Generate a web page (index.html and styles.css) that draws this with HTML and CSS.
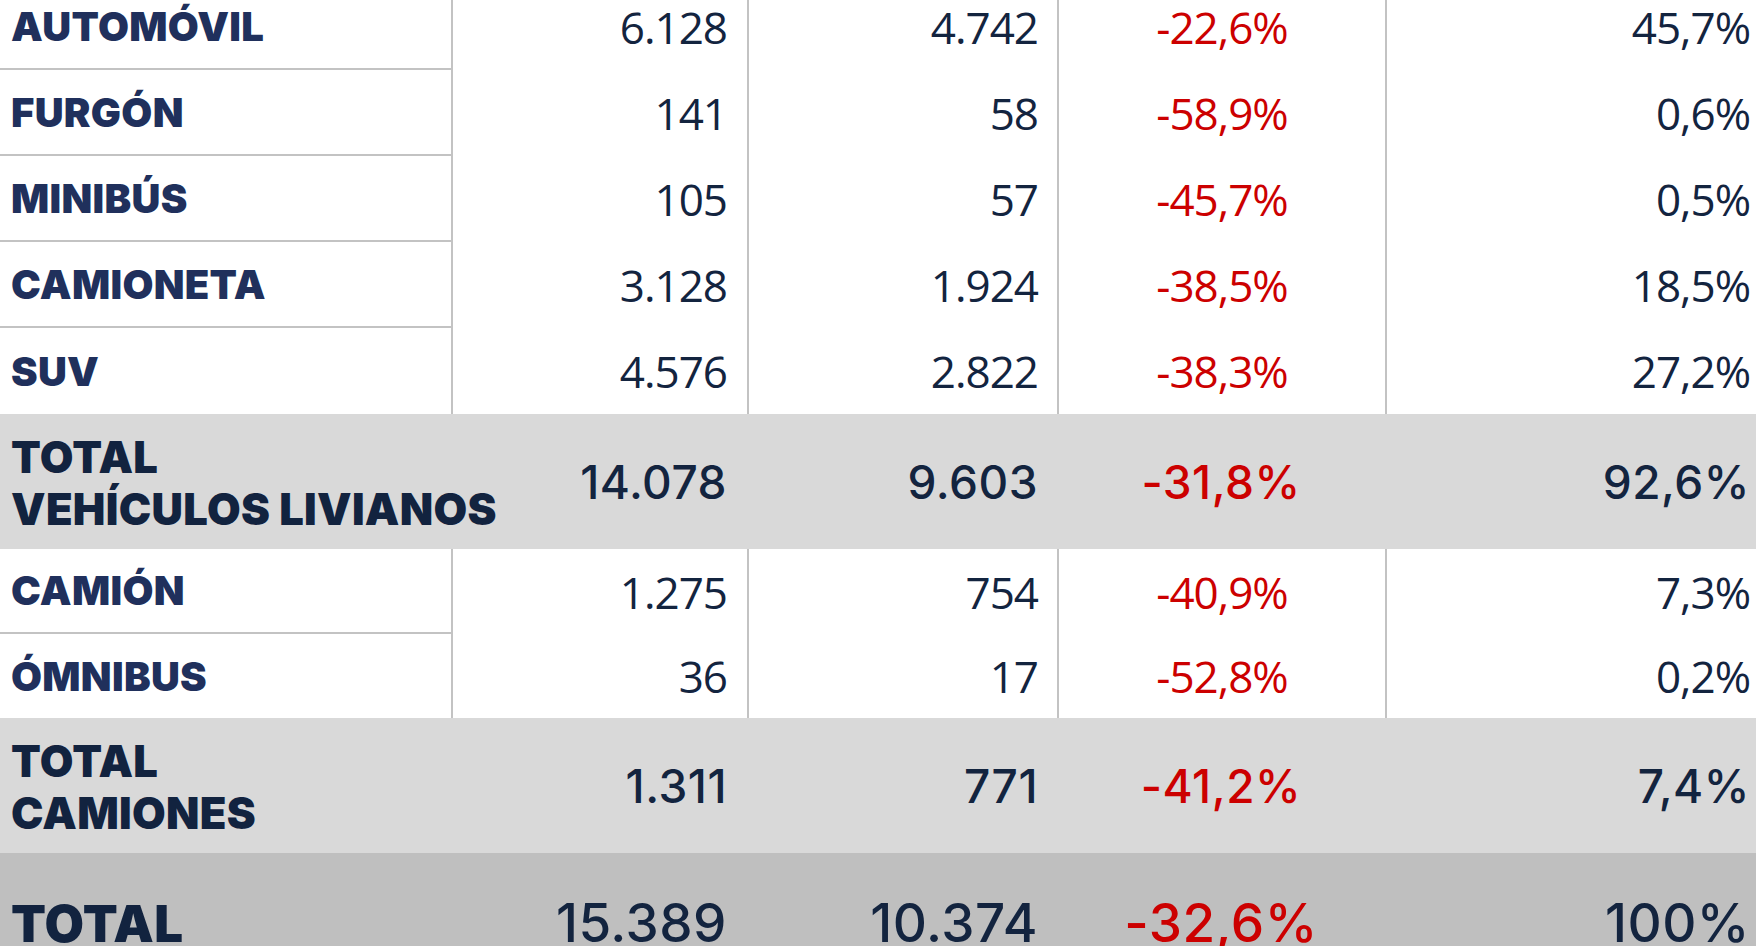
FILE: index.html
```html
<!DOCTYPE html>
<html lang="es">
<head>
<meta charset="utf-8">
<title>Ventas por segmento</title>
<link rel="stylesheet" href="styles.css">
</head>
<body>
<div class="table">
  <div class="row">
    <div class="label">AUTOMÓVIL</div>
    <div class="num c2">6.128</div>
    <div class="num c3">4.742</div>
    <div class="num c4 neg">-22,6%</div>
    <div class="num c5">45,7%</div>
  </div>
  <div class="row">
    <div class="label">FURGÓN</div>
    <div class="num c2">141</div>
    <div class="num c3">58</div>
    <div class="num c4 neg">-58,9%</div>
    <div class="num c5">0,6%</div>
  </div>
  <div class="row">
    <div class="label">MINIBÚS</div>
    <div class="num c2">105</div>
    <div class="num c3">57</div>
    <div class="num c4 neg">-45,7%</div>
    <div class="num c5">0,5%</div>
  </div>
  <div class="row">
    <div class="label">CAMIONETA</div>
    <div class="num c2">3.128</div>
    <div class="num c3">1.924</div>
    <div class="num c4 neg">-38,5%</div>
    <div class="num c5">18,5%</div>
  </div>
  <div class="row last">
    <div class="label">SUV</div>
    <div class="num c2">4.576</div>
    <div class="num c3">2.822</div>
    <div class="num c4 neg">-38,3%</div>
    <div class="num c5">27,2%</div>
  </div>
  <div class="row subtotal">
    <div class="label">TOTAL<br>VEHÍCULOS LIVIANOS</div>
    <div class="num c2">14.078</div>
    <div class="num c3">9.603</div>
    <div class="num c4 neg">-31,8%</div>
    <div class="num c5">92,6%</div>
  </div>
  <div class="row short">
    <div class="label">CAMIÓN</div>
    <div class="num c2">1.275</div>
    <div class="num c3">754</div>
    <div class="num c4 neg">-40,9%</div>
    <div class="num c5">7,3%</div>
  </div>
  <div class="row last short2">
    <div class="label">ÓMNIBUS</div>
    <div class="num c2">36</div>
    <div class="num c3">17</div>
    <div class="num c4 neg">-52,8%</div>
    <div class="num c5">0,2%</div>
  </div>
  <div class="row subtotal">
    <div class="label">TOTAL<br>CAMIONES</div>
    <div class="num c2">1.311</div>
    <div class="num c3">771</div>
    <div class="num c4 neg">-41,2%</div>
    <div class="num c5">7,4%</div>
  </div>
  <div class="row grand">
    <div class="label">TOTAL</div>
    <div class="num c2">15.389</div>
    <div class="num c3">10.374</div>
    <div class="num c4 neg">-32,6%</div>
    <div class="num c5">100%</div>
  </div>
</div>
</body>
</html>
```

FILE: styles.css
```css
html, body {
  margin: 0;
  padding: 0;
  background: #ffffff;
  overflow: hidden;
}

.table {
  width: 1756px;
  margin-top: -16px;
}

.row {
  display: grid;
  grid-template-columns: 451px 296px 310px 328px 1fr;
  height: 86px;
  box-sizing: border-box;
}

.row.short { height: 85px; }
.row.short2 { height: 84px; }

.label {
  display: flex;
  align-items: center;
  padding-left: 11px;
  font-family: "Inter", "Liberation Sans", sans-serif;
  font-weight: 900;
  font-size: 40px;
  color: #20305c;
  letter-spacing: 0.3px;
  border-bottom: 2px solid #c3c3c3;
  white-space: nowrap;
}

.row.last .label { border-bottom: none; }

.num {
  display: flex;
  align-items: center;
  justify-content: flex-end;
  font-family: "Open Sans", "Noto Sans", sans-serif;
  font-size: 44px;
  letter-spacing: -1px;
  font-weight: 400;
  color: #13243f;
  border-left: 2px solid #c3c3c3;
}

.c2 { padding-right: 20px; }
.c3 { padding-right: 19px; }
.c4 { justify-content: center; }
.c5 { padding-right: 6px; }

.neg { color: #cc0000; }

.subtotal {
  height: 135px;
  background: #d9d9d9;
}

.subtotal .label {
  border-bottom: none;
  font-size: 43.5px;
  line-height: 52px;
  color: #12233f;
  padding-top: 2px;
}

.subtotal .num,
.grand .num {
  border-left: none;
  font-family: "Inter", "Liberation Sans", sans-serif;
  font-weight: 500;
  font-size: 46px;
  letter-spacing: 0.5px;
}

.grand {
  height: 140px;
  background: #bfbfbf;
}

.grand .label {
  border-bottom: none;
  font-size: 51px;
  color: #12233f;
}

.grand .num {
  font-size: 53px;
}
```
